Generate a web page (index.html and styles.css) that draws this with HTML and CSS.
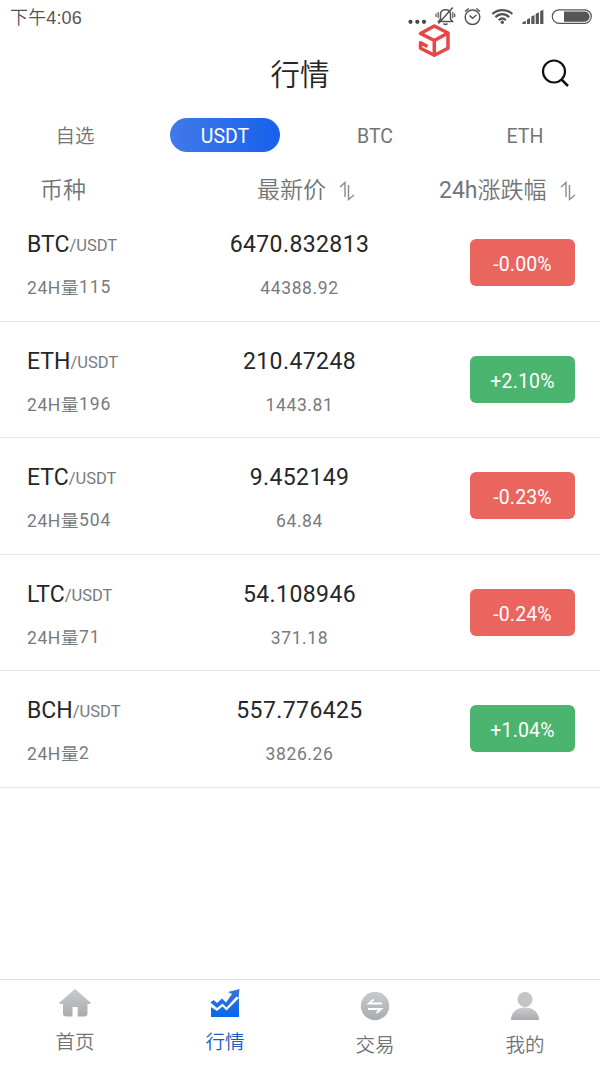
FILE: index.html
```html
<!DOCTYPE html>
<html lang="zh-CN">
<head>
<meta charset="utf-8">
<meta name="viewport" content="width=device-width, initial-scale=1">
<title>行情</title>
<link rel="stylesheet" href="styles.css">
</head>
<body>
<div class="app">
  <div class="status">
    <span class="clock">下午4:06</span>
    <svg class="status-icons" width="200" height="34" viewBox="0 0 200 34" fill="none" stroke="#555">
      <g fill="#444" stroke="none"><circle cx="10.5" cy="21.800" r="2.100"/><circle cx="17.300" cy="21.800" r="2.100"/><circle cx="24" cy="21.800" r="2.100"/></g>
      <g stroke-width="1.500"><path d="M38.500 21.500 40.500 19v-4.500c0-3 2-4.800 5-4.800s5 1.800 5 4.800V19l2 2.500zM43.500 23.500c1 1.200 3 1.200 4 0M52.800 7.500 38.500 23.500"/><path d="M38.200 12v6M36 13.500v3.500M52.800 12v6M54.700 13.500v3.500" stroke-width="1.200"/></g>
      <g stroke-width="1.500"><circle cx="72.500" cy="17.200" r="7.300"/><path d="m69.500 15.500 3 2.800 4-3.300M65 11.500l3.700-3M80 11.500l-3.700-3"/></g>
      <g stroke-width="2.200"><path d="M92.300 14c5.500-5.300 14.700-5.300 20 0M95.500 17.200c4-4 9.600-4 13.600 0M98.700 20.200c2.300-2.200 4.900-2.200 7.200 0"/><circle cx="102.300" cy="22.300" r="1.700" fill="#555" stroke="none"/></g>
      <path d="M122.500 24v-1.800l3.300-1.500V24zM127 24v-4.500l3-1.500v6zM131.300 24v-7.500l3.200-1.500v9zM135.700 24V13.700l3.200-1.500V24zM140.200 24V11.300l3.200-1.500V24z" fill="#555" stroke="none"/>
      <rect x="152.300" y="9.800" width="39" height="13.600" rx="6.800" stroke-width="1.200"/>
      <path d="M164 11.500h20.500a5 5 0 0 1 0 10.200H164z" fill="#555" stroke="none"/>
    </svg>
    <svg class="cube" width="33" height="34" viewBox="0 0 33 34" fill="none" stroke="#ea4545" stroke-width="3.500" stroke-linejoin="round"><path d="M30 9 16.300 2 2.500 9.500 16.300 16.500 30 9v15.200L16.300 31.300 2.500 24.300v-5.500l7 3.700M16.300 16.500v14.500"/></svg>
  </div>
  <header class="header">
    <h1 class="title">行情</h1>
    <svg class="search" width="30" height="30" viewBox="0 0 30 30" fill="none" stroke="#111" stroke-width="2.200"><circle cx="14" cy="13.500" r="11"/><path d="m21.500 21.500 6.500 6.500" stroke-width="2.500"/></svg>
  </header>
  <nav class="tabs">
    <span class="tab">自选</span>
    <span class="tab"><b class="pill">USDT</b></span>
    <span class="tab latin">BTC</span>
    <span class="tab latin">ETH</span>
  </nav>
  <div class="columns">
    <span class="col-name">币种</span>
    <span class="col-price">最新价<svg class="sort" width="16" height="20" viewBox="0 0 16 20"><path d="m1 6 5-4.500V16M9.500 4v14.500L15 14"/></svg></span>
    <span class="col-change"><span><span class="latin">24h</span>涨跌幅</span><svg class="sort" width="16" height="20" viewBox="0 0 16 20"><path d="m1 6 5-4.500V16M9.500 4v14.500L15 14"/></svg></span>
  </div>
  <main class="list">
    <div class="row">
      <div class="coin"><div class="pair">BTC<small>/USDT</small></div><div class="volume">24H<i>量</i><span>115</span></div></div>
      <div class="quote"><div class="price">6470.832813</div><div class="fiat">44388.92</div></div>
      <div class="change down">-0.00%</div>
    </div>
    <div class="row">
      <div class="coin"><div class="pair">ETH<small>/USDT</small></div><div class="volume">24H<i>量</i><span>196</span></div></div>
      <div class="quote"><div class="price">210.47248</div><div class="fiat">1443.81</div></div>
      <div class="change up">+2.10%</div>
    </div>
    <div class="row">
      <div class="coin"><div class="pair">ETC<small>/USDT</small></div><div class="volume">24H<i>量</i><span>504</span></div></div>
      <div class="quote"><div class="price">9.452149</div><div class="fiat">64.84</div></div>
      <div class="change down">-0.23%</div>
    </div>
    <div class="row">
      <div class="coin"><div class="pair">LTC<small>/USDT</small></div><div class="volume">24H<i>量</i><span>71</span></div></div>
      <div class="quote"><div class="price">54.108946</div><div class="fiat">371.18</div></div>
      <div class="change down">-0.24%</div>
    </div>
    <div class="row">
      <div class="coin"><div class="pair">BCH<small>/USDT</small></div><div class="volume">24H<i>量</i><span>2</span></div></div>
      <div class="quote"><div class="price">557.776425</div><div class="fiat">3826.26</div></div>
      <div class="change up">+1.04%</div>
    </div>
  </main>
  <nav class="bottom">
    <span class="item">
      <svg width="34" height="30" viewBox="0 0 34 30"><defs><linearGradient id="gray" x2="0" y2="1"><stop stop-color="#c9cbcd"/><stop offset="1" stop-color="#a9acaf"/></linearGradient></defs><path fill="url(#gray)" d="M17 0 32.500 13.500c.5 1-.5 1.500-1.500 1.500h-1.500v9.500a3 3 0 0 1-3 3h-6.800V18h-5.200v9.500H8a3 3 0 0 1-3-3V15H3c-1.200 0-2-.5-1.500-1.500z"/></svg>
      <span>首页</span>
    </span>
    <span class="item active">
      <svg width="34" height="30" viewBox="0 0 34 30"><defs><linearGradient id="blue" x2="0" y2="1"><stop stop-color="#3972dc"/><stop offset="1" stop-color="#0867ed"/></linearGradient></defs><path fill="url(#blue)" d="m2.500 13.500 3-2.500 3.500 3 5-4.500 4 4 6-8.500-4-2L31.500 0l-1 9-2-1.500L18.500 18.500l-4-4L9 19zM3 18l6 4 5.500-4.500 4 4L31 9v19H3z"/></svg>
      <span>行情</span>
    </span>
    <span class="item low">
      <svg width="34" height="30" viewBox="0 0 34 30"><circle cx="17" cy="14" r="14.200" fill="url(#gray)"/><path d="M24 11.500H11l4.500-4M10 17h13l-4.500 4" fill="none" stroke="#fff" stroke-width="2"/></svg>
      <span>交易</span>
    </span>
    <span class="item low">
      <svg width="34" height="30" viewBox="0 0 34 30"><circle cx="17" cy="7.500" r="7.500" fill="#c2c4c7"/><path fill="url(#gray)" d="M3 28c0-7 5-12.500 14-12.500S31 21 31 28z"/></svg>
      <span>我的</span>
    </span>
  </nav>
</div>
</body>
</html>
```
FILE: styles.css
```css
* { box-sizing: border-box; }
body {
  margin: 0;
  background: #fff;
  color: #717578;
  font-family: Roboto, "Noto Sans CJK SC", sans-serif;
  font-weight: 400;
}
svg { display: block; flex: none; }
.app { display: flex; flex-direction: column; height: 1066px; overflow: hidden; }
.status { position: relative; display: flex; justify-content: space-between; height: 34px; }
.clock { padding-left: 10px; font: 350 18px/36px "Liberation Sans", "Noto Sans CJK SC", sans-serif; letter-spacing: .150px; color: #555; }
.cube { position: absolute; left: 418px; top: 24px; }
.header { display: grid; grid-template-columns: 1fr 200px 1fr; align-items: start; height: 80px; }
.title { grid-column: 2; margin: 0; text-align: center; font-size: 29.500px; font-weight: 350; color: #252525; line-height: 83px; }
.search { justify-self: end; margin: 24px 30px 0 0; }
.tabs { display: grid; grid-template-columns: repeat(4, 1fr); height: 42px; padding-top: 4px; align-items: start; text-align: center; font-size: 19.500px; font-weight: 350; }
.tab { line-height: 37px; }
.pill { display: block; width: 110px; height: 34px; margin: 0 auto; border-radius: 17px; line-height: 37px; font-weight: 400; color: #fff; background: linear-gradient(90deg, #4179e8, #1761ec); }
.latin { font-weight: 400; }
.columns { display: flex; align-items: center; height: 49px; padding: 20px 22px 0 40px; font-size: 23px; font-weight: 350; line-height: 31px; }
.col-name { width: 217px; }
.col-price, .col-change { display: flex; align-items: center; gap: 13px; white-space: nowrap; }
.col-price { width: 182px; }
.sort { fill: none; stroke: #888c8e; stroke-width: 1.400; }
.row { display: grid; grid-template-columns: 200px 1fr 105px; height: 116.600px; padding: 0 25px 0 27px; border-bottom: 1px solid #e6e6e7; }
.pair, .price { height: 32px; margin-top: 23px; line-height: 33px; font-size: 23px; color: #252729; white-space: nowrap; }
.pair small { position: relative; top: -1px; font-size: 16.500px; color: #777b7e; }
.volume, .fiat { height: 26px; margin-top: 15px; line-height: 26px; font-size: 17.500px; letter-spacing: .600px; white-space: nowrap; color: #777b7e; }
.volume i { font-style: normal; font-weight: 350; }
.volume span { display: inline-block; transform: translateY(-1px); letter-spacing: .900px; }
.quote { text-align: center; margin: 0 71px 0 -27px; }
.price { letter-spacing: .400px; }
.change { margin-top: 34px; height: 47px; line-height: 51px; border-radius: 6px; text-align: center; color: #fff; font-size: 19.500px; letter-spacing: .150px; }
.down { background: #eb655f; }
.up { background: #4bb46e; }
.bottom { display: grid; grid-template-columns: repeat(4, 1fr); height: 87px; margin-top: auto; border-top: 1px solid #e0e2e4; }
.item { display: flex; flex-direction: column; align-items: center; gap: 9px; padding-top: 9px; font-size: 19.500px; line-height: 30px; font-weight: 350; }
.low { padding-top: 12px; }
.active { color: #2059bd; }
```
